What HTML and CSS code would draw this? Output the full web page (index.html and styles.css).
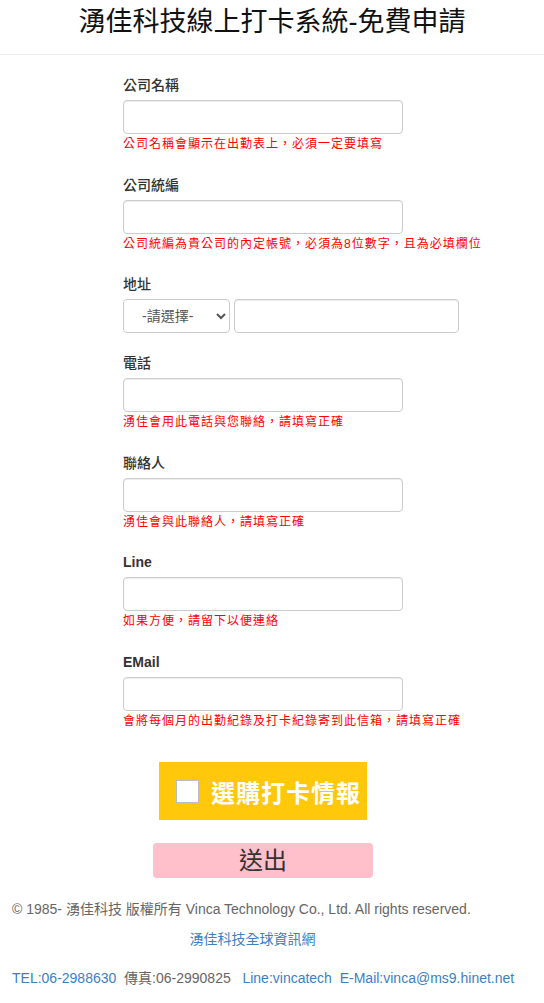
FILE: index.html
```html
<!DOCTYPE html>
<html lang="zh-Hant">
<head>
  <meta charset="UTF-8">
  <meta name="viewport" content="width=device-width, initial-scale=1.0">
  <title>湧佳科技線上打卡系統-免費申請</title>
  <link rel="stylesheet" href="styles.css">
</head>
<body>
  <div class="header">
    <h1>湧佳科技線上打卡系統-免費申請</h1>
  </div>

  <form class="apply-form" onsubmit="return false;">
    <div class="form-group">
      <label for="company" class="cjk">公司名稱</label>
      <input type="text" id="company" class="form-control">
      <div class="help">公司名稱會顯示在出勤表上，必須一定要填寫</div>
    </div>

    <div class="form-group">
      <label for="taxid" class="cjk">公司統編</label>
      <input type="text" id="taxid" class="form-control">
      <div class="help">公司統編為貴公司的內定帳號，必須為8位數字，且為必填欄位</div>
    </div>

    <div class="form-group no-help">
      <label for="address" class="cjk">地址</label>
      <div class="address-row">
        <select id="city" class="form-select">
          <option>-請選擇-</option>
        </select>
        <input type="text" id="address" class="form-control address-input">
      </div>
    </div>

    <div class="form-group">
      <label for="phone" class="cjk">電話</label>
      <input type="text" id="phone" class="form-control">
      <div class="help">湧佳會用此電話與您聯絡，請填寫正確</div>
    </div>

    <div class="form-group">
      <label for="contact" class="cjk">聯絡人</label>
      <input type="text" id="contact" class="form-control">
      <div class="help">湧佳會與此聯絡人，請填寫正確</div>
    </div>

    <div class="form-group">
      <label for="line">Line</label>
      <input type="text" id="line" class="form-control">
      <div class="help">如果方便，請留下以便連絡</div>
    </div>

    <div class="form-group">
      <label for="email">EMail</label>
      <input type="text" id="email" class="form-control">
      <div class="help">會將每個月的出勤紀錄及打卡紀錄寄到此信箱，請填寫正確</div>
    </div>
  </form>

  <div class="actions">
    <label class="buy-box">
      <input type="checkbox" class="buy-check">
      <span>選購打卡情報</span>
    </label>
    <button class="submit-btn" type="button">送出</button>
  </div>

  <div class="footer">
    <p class="copyright">© 1985- 湧佳科技 版權所有 Vinca Technology Co., Ltd. All rights reserved.</p>
    <p class="site-link"><a href="#">湧佳科技全球資訊網</a></p>
    <p class="contact-line">
      <a href="#">TEL:06-2988630</a>&nbsp;&nbsp;<span class="fax">傳真:06-2990825</span>&nbsp;&nbsp;&nbsp;<a href="#">Line:vincatech</a>&nbsp;&nbsp;<a href="#">E-Mail:vinca@ms9.hinet.net</a>
    </p>
  </div>
</body>
</html>
```

FILE: styles.css
```css
body {
  margin: 0;
  font-family: "Liberation Sans", "Noto Sans CJK TC", sans-serif;
  font-size: 14px;
  color: #333;
  background: #fff;
}
.header {
  padding-bottom: 10px;
  border-bottom: 1px solid #eee;
}
.header h1 {
  margin: 0;
  line-height: 44px;
  font-size: 27px;
  font-weight: normal;
  color: #111;
  text-align: center;
}
.apply-form {
  width: 336px;
  margin-left: 123px;
  padding-top: 20px;
}
.form-group {
  margin-bottom: 21px;
}
.form-group.no-help {
  margin-bottom: 20px;
}
.form-group label {
  display: block;
  line-height: 20px;
  margin-bottom: 5px;
  font-weight: bold;
}
.form-group label.cjk {
  font-weight: 500;
}
.form-control {
  display: block;
  box-sizing: border-box;
  width: 280px;
  height: 34px;
  padding: 6px 12px;
  border: 1px solid #ccc;
  border-radius: 4px;
  box-shadow: inset 0 1px 1px rgba(0, 0, 0, 0.075);
  font-size: 14px;
}
.help {
  margin-top: 1px;
  line-height: 18.5px;
  font-size: 12px;
  letter-spacing: 1px;
  white-space: nowrap;
  color: #f00;
}
.address-row {
  display: flex;
  gap: 4px;
}
.form-select {
  box-sizing: border-box;
  width: 108px;
  height: 34px;
  padding: 0 6px 0 14px;
  border: 1px solid #ccc;
  border-radius: 4px;
  background: #fff;
  color: #555;
  font-family: inherit;
  font-size: 14px;
}
.address-input {
  width: 226px;
}
.actions {
  width: 526px;
  display: flex;
  flex-direction: column;
  align-items: center;
  margin-top: 32px;
}
.buy-box {
  box-sizing: border-box;
  width: 208px;
  height: 58px;
  display: flex;
  align-items: center;
  gap: 12px;
  padding-left: 17px;
  background: #ffc80b;
  color: #fff;
  font-size: 24px;
  font-weight: bold;
  letter-spacing: 1px;
}
.buy-check {
  appearance: none;
  -webkit-appearance: none;
  margin: 0;
  width: 23px;
  height: 23px;
  background: #fff;
  border: 1px solid #b8bcc4;
}
.submit-btn {
  margin-top: 23px;
  width: 220px;
  height: 35px;
  border: none;
  border-radius: 4px;
  background: pink;
  color: #333;
  font-family: inherit;
  font-size: 24px;
  line-height: 35px;
  padding: 0;
  cursor: pointer;
}
.footer {
  width: 481px;
  padding: 0 12px;
  margin-top: 21px;
}
.footer p {
  margin: 0;
  line-height: 20px;
}
.copyright {
  color: #666;
}
.site-link {
  margin-top: 10px !important;
  text-align: center;
}
.contact-line {
  margin-top: 19px !important;
  white-space: nowrap;
}
.footer a {
  color: #3c7fc2;
  text-decoration: none;
}
.fax {
  color: #666;
}
```
